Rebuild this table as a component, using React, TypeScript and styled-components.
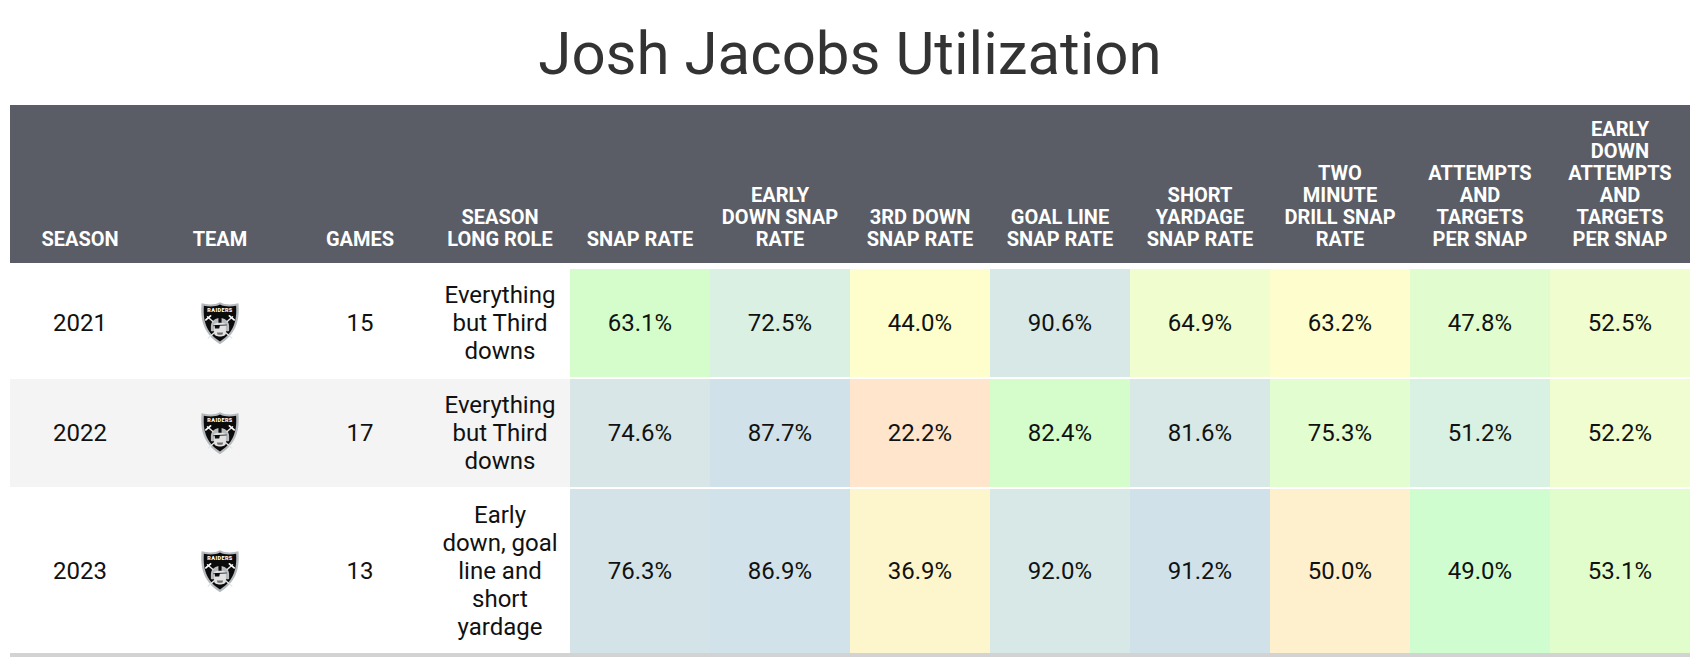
import React from "react";
import styled, { createGlobalStyle } from "styled-components";

const GlobalStyle = createGlobalStyle`
  html, body { margin: 0; padding: 0; background: #ffffff; }
  body { font-family: Roboto, "Liberation Sans", Arial, sans-serif; }
`;

const Page = styled.div`
  padding: 24px 10px 0;
  width: 1680px;
`;

const Title = styled.h1`
  margin: 0 0 21px;
  font-family: Roboto, "Liberation Sans", sans-serif;
  font-weight: 400;
  font-size: 60px;
  line-height: 60px;
  color: #333333;
  text-align: center;
`;

const HeaderRow = styled.div`
  display: grid;
  grid-template-columns: repeat(12, 1fr);
  background: #5a5d65;
`;

const HeaderCell = styled.div`
  display: flex;
  flex-direction: column;
  justify-content: flex-end;
  align-items: center;
  padding: 13px 6px;
  font-weight: 700;
  font-size: 20px;
  line-height: 22px;
  color: #ffffff;
  text-transform: uppercase;
  text-align: center;
  white-space: nowrap;
`;

const Body = styled.div`
  display: grid;
  row-gap: 2px;
  margin-top: 6px;
  border-bottom: 4px solid #d3d3d3;
`;

const BodyRow = styled.div<{ $striped: boolean }>`
  display: grid;
  grid-template-columns: repeat(12, 1fr);
  background: ${(p) => (p.$striped ? "#f4f4f4" : "#ffffff")};
`;

const Cell = styled.div<{ $bg?: string }>`
  display: flex;
  flex-direction: column;
  align-items: center;
  justify-content: center;
  padding: 12px 8px;
  font-size: 24px;
  line-height: 28px;
  color: #111111;
  text-align: center;
  white-space: nowrap;
  background: ${(p) => p.$bg ?? "transparent"};
`;

const Line = styled.span`
  display: block;
`;

const LogoWrap = styled.div`
  width: 40px;
  height: 44px;
  display: flex;
`;

const RaidersLogo = () => (
  <LogoWrap>
    <svg viewBox="0 0 100 112" width="40" height="44">
      <path
        d="M50 3 C62 10 80 10 97 6 C100 42 96 82 50 110 C4 82 0 42 3 6 C20 10 38 10 50 3 Z"
        fill="#b4babd"
      />
      <path
        d="M50 9 C61 15 78 15 91 12 C93 44 89 78 50 103 C11 78 7 44 9 12 C22 15 39 15 50 9 Z"
        fill="#0b0b0b"
      />
      <text
        x="50"
        y="29"
        textAnchor="middle"
        fontFamily="Roboto, sans-serif"
        fontWeight="900"
        fontSize="14"
        fill="#ffffff"
        letterSpacing="1"
      >
        RAIDERS
      </text>
      <g stroke="#e6e6e6" strokeWidth="3.5" strokeLinecap="round">
        <line x1="18" y1="40" x2="80" y2="94" />
        <line x1="82" y1="40" x2="20" y2="94" />
      </g>
      <g stroke="#ffffff" strokeWidth="4.5" strokeLinecap="round">
        <line x1="14" y1="48" x2="26" y2="38" />
        <line x1="86" y1="48" x2="74" y2="38" />
      </g>
      <path
        d="M28 64 C28 38 72 38 72 64 L72 76 L28 76 Z"
        fill="#b4babd"
        stroke="#ffffff"
        strokeWidth="1.5"
      />
      <path d="M46 40 L54 40 L54 60 L46 60 Z" fill="#0b0b0b" />
      <path
        d="M35 60 C35 54 65 54 65 60 L65 82 C65 93 35 93 35 82 Z"
        fill="#e2e2e2"
      />
      <path d="M37 61 L50 61 L48 70 L37 70 Z" fill="#0b0b0b" />
      <line x1="33" y1="63" x2="67" y2="61" stroke="#0b0b0b" strokeWidth="2" />
      <path d="M42 80 L58 80 L56 86 L44 86 Z" fill="#6f6f6f" />
    </svg>
  </LogoWrap>
);

const headers: string[][] = [
  ["Season"],
  ["Team"],
  ["Games"],
  ["Season", "long role"],
  ["Snap rate"],
  ["Early", "down snap", "rate"],
  ["3rd down", "snap rate"],
  ["Goal line", "snap rate"],
  ["Short", "yardage", "snap rate"],
  ["Two", "minute", "drill snap", "rate"],
  ["Attempts", "and", "targets", "per snap"],
  ["Early", "down", "attempts", "and", "targets", "per snap"],
];

type Row = {
  season: string;
  games: string;
  role: string[];
  values: [string, string][];
};

const rows: Row[] = [
  {
    season: "2021",
    games: "15",
    role: ["Everything", "but Third", "downs"],
    values: [
      ["63.1%", "#d5fdcc"],
      ["72.5%", "#daf0e2"],
      ["44.0%", "#fefecc"],
      ["90.6%", "#d7e8e6"],
      ["64.9%", "#effdcf"],
      ["63.2%", "#fdfdcd"],
      ["47.8%", "#e1fdcf"],
      ["52.5%", "#effdcf"],
    ],
  },
  {
    season: "2022",
    games: "17",
    role: ["Everything", "but Third", "downs"],
    values: [
      ["74.6%", "#d8e6e8"],
      ["87.7%", "#d1e1ea"],
      ["22.2%", "#fee5cb"],
      ["82.4%", "#d4fdcb"],
      ["81.6%", "#d8e8e6"],
      ["75.3%", "#e2fdcf"],
      ["51.2%", "#d9f1e3"],
      ["52.2%", "#f0fdd0"],
    ],
  },
  {
    season: "2023",
    games: "13",
    role: ["Early", "down, goal", "line and", "short", "yardage"],
    values: [
      ["76.3%", "#d4e3e8"],
      ["86.9%", "#d2e2ea"],
      ["36.9%", "#fdf5cb"],
      ["92.0%", "#d7e8e6"],
      ["91.2%", "#d0e1ea"],
      ["50.0%", "#fef0cc"],
      ["49.0%", "#cffdcf"],
      ["53.1%", "#e2fdcc"],
    ],
  },
];

export default function App() {
  return (
    <>
      <GlobalStyle />
      <Page>
        <Title>Josh Jacobs Utilization</Title>
        <HeaderRow>
          {headers.map((lines, i) => (
            <HeaderCell key={i}>
              {lines.map((l, j) => (
                <Line key={j}>{l}</Line>
              ))}
            </HeaderCell>
          ))}
        </HeaderRow>
        <Body>
          {rows.map((r, i) => (
            <BodyRow key={r.season} $striped={i % 2 === 1}>
              <Cell>{r.season}</Cell>
              <Cell>
                <RaidersLogo />
              </Cell>
              <Cell>{r.games}</Cell>
              <Cell>
                {r.role.map((l, j) => (
                  <Line key={j}>{l}</Line>
                ))}
              </Cell>
              {r.values.map(([v, bg], j) => (
                <Cell key={j} $bg={bg}>
                  {v}
                </Cell>
              ))}
            </BodyRow>
          ))}
        </Body>
      </Page>
    </>
  );
}
